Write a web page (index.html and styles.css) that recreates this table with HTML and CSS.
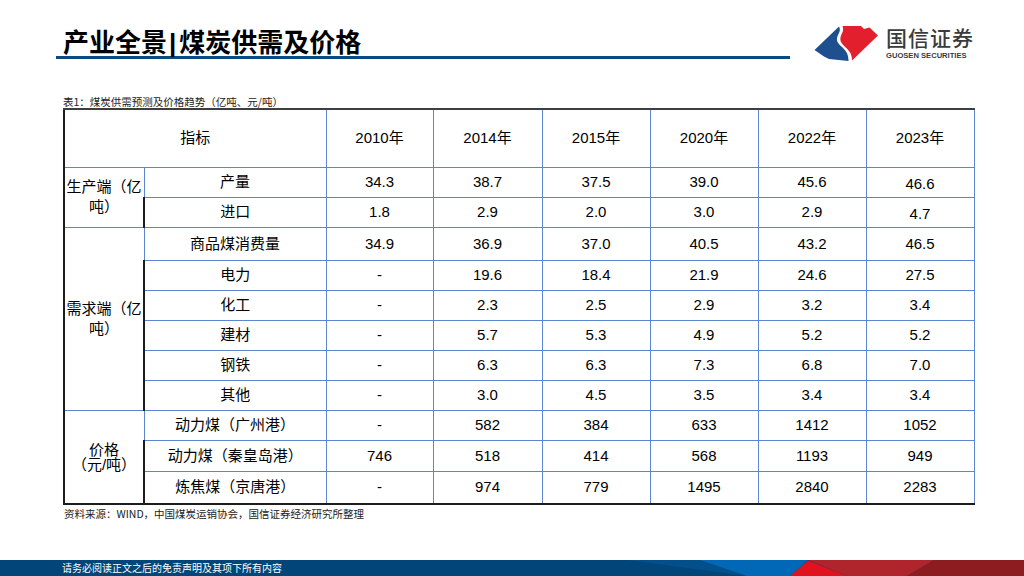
FILE: index.html
```html
<!DOCTYPE html>
<html lang="zh-CN">
<head>
<meta charset="utf-8">
<title>产业全景|煤炭供需及价格</title>
<link rel="stylesheet" href="styles.css">
</head>
<body>
<div class="page">
  <header class="header">
    <div class="title-wrap">
      <h1 class="title">产业全景<span class="bar">|</span>煤炭供需及价格</h1>
    </div>
    <div class="logo">
      <svg class="logo-mark" width="68" height="42" viewBox="0 0 68 42">
        <path d="M2.5,28 L27,4.5 C30,10 24,13 25,18.5 C26,24.5 37,26.5 36.5,39 L17,37 L12,34.5 Z" fill="#1e4f8e"/>
        <path d="M30.5,4 L49,4 L52,7 L57.5,5.5 L66,13.5 L40,38.5 C40.5,27 29.5,24.5 28.5,18.5 C27.5,12.5 33,10 30.5,4 Z" fill="#e11f2d"/>
      </svg>
      <div class="logo-text">
        <div class="logo-cn">国信证券</div>
        <div class="logo-en">GUOSEN SECURITIES</div>
      </div>
    </div>
  </header>

  <main class="content">
    <p class="caption">表1：煤炭供需预测及价格趋势（亿吨、元/吨）</p>
    <table class="data">
      <colgroup>
        <col class="c-grp"><col class="c-item"><col class="c-y1"><col class="c-y2"><col class="c-y"><col class="c-y"><col class="c-y"><col class="c-y">
      </colgroup>
      <thead>
        <tr class="h60">
          <th colspan="2">指标</th>
          <th>2010年</th><th>2014年</th><th>2015年</th><th>2020年</th><th>2022年</th><th>2023年</th>
        </tr>
      </thead>
      <tbody>
        <tr class="h30">
          <td rowspan="2" class="grp">生产端（亿吨）</td>
          <td>产量</td><td>34.3</td><td>38.7</td><td>37.5</td><td>39.0</td><td>45.6</td><td class="low">46.6</td>
        </tr>
        <tr class="h30">
          <td>进口</td><td>1.8</td><td>2.9</td><td>2.0</td><td>3.0</td><td>2.9</td><td class="low">4.7</td>
        </tr>
        <tr class="h33">
          <td rowspan="6" class="grp">需求端（亿吨）</td>
          <td>商品煤消费量</td><td>34.9</td><td>36.9</td><td>37.0</td><td>40.5</td><td>43.2</td><td>46.5</td>
        </tr>
        <tr class="h30">
          <td>电力</td><td>-</td><td>19.6</td><td>18.4</td><td>21.9</td><td>24.6</td><td>27.5</td>
        </tr>
        <tr class="h30">
          <td>化工</td><td>-</td><td>2.3</td><td>2.5</td><td>2.9</td><td>3.2</td><td>3.4</td>
        </tr>
        <tr class="h30">
          <td>建材</td><td>-</td><td>5.7</td><td>5.3</td><td>4.9</td><td>5.2</td><td>5.2</td>
        </tr>
        <tr class="h30">
          <td>钢铁</td><td>-</td><td>6.3</td><td>6.3</td><td>7.3</td><td>6.8</td><td>7.0</td>
        </tr>
        <tr class="h30">
          <td>其他</td><td>-</td><td>3.0</td><td>4.5</td><td>3.5</td><td>3.4</td><td>3.4</td>
        </tr>
        <tr class="h30">
          <td rowspan="3" class="grp tight">价格<br>（元/吨）</td>
          <td>动力煤（广州港）</td><td>-</td><td>582</td><td>384</td><td>633</td><td>1412</td><td>1052</td>
        </tr>
        <tr class="h31">
          <td>动力煤（秦皇岛港）</td><td>746</td><td>518</td><td>414</td><td>568</td><td>1193</td><td>949</td>
        </tr>
        <tr class="h32">
          <td>炼焦煤（京唐港）</td><td>-</td><td>974</td><td>779</td><td>1495</td><td>2840</td><td>2283</td>
        </tr>
      </tbody>
    </table>
    <p class="source">资料来源：WIND，中国煤炭运销协会，国信证券经济研究所整理</p>
  </main>

  <footer class="footer">
    <span class="footer-text">请务必阅读正文之后的免责声明及其项下所有内容</span>
    <svg class="footer-deco" width="420" height="16" viewBox="604 0 420 16" preserveAspectRatio="none">
      <polygon points="627,0 805,0 805,16 747,16" fill="#024f8b"/>
      <polygon points="700,0 808,0 790,16 747,16" fill="#0068b6"/>
      <polygon points="808,0 934,0 907,16 847,16" fill="#b0242c"/>
      <polygon points="790,16 808,0.5 847,16" fill="#e1121e"/>
      <polygon points="934,0 1024,0 1024,16 907,16" fill="#8d1c21"/>
    </svg>
  </footer>
</div>
</body>
</html>
```

FILE: styles.css
```css
* { box-sizing: border-box; }

html, body {
  margin: 0;
  padding: 0;
  background: #ffffff;
}

.page {
  width: 1024px;
  height: 576px;
  display: flex;
  flex-direction: column;
  overflow: hidden;
  font-family: "Liberation Sans", "Noto Sans CJK SC", sans-serif;
  color: #000;
}

/* ---------- header ---------- */
.header {
  display: flex;
  align-items: flex-start;
  padding-left: 56px;
  height: 59px;
  flex: none;
}

.title-wrap {
  width: 734px;
  padding-top: 26px;
}

.title {
  margin: 0;
  padding-left: 7px;
  height: 33px;
  line-height: 30px;
  font-family: "Noto Sans CJK SC", sans-serif;
  font-size: 26px;
  font-weight: 700;
  color: #000;
  border-bottom: 3px solid #0b4a80;
  white-space: nowrap;
}

.title .bar {
  font-family: "Liberation Sans", sans-serif;
  font-weight: 700;
  padding: 0 3px 0 2px;
}

.logo {
  display: flex;
  align-items: flex-start;
  margin-left: 22px;
  margin-top: 22px;
  gap: 6px;
}

.logo-mark { display: block; }

.logo-text {
  display: flex;
  flex-direction: column;
  padding-top: 3px;
}

.logo-cn {
  font-family: "Noto Sans CJK SC", sans-serif;
  font-size: 21px;
  line-height: 24px;
  letter-spacing: 1px;
  color: #3b3b3b;
  font-weight: 500;
}

.logo-en {
  margin-top: 2px;
  font-family: "Liberation Sans", sans-serif;
  font-size: 7.6px;
  line-height: 9px;
  font-weight: 700;
  color: #3b3b3b;
  white-space: nowrap;
}

/* ---------- content ---------- */
.content {
  flex: 1;
  padding-left: 63px;
  padding-top: 36px;
}

.caption, .source {
  margin: 0;
  font-family: "Noto Sans CJK SC", sans-serif;
  font-size: 10.5px;
  line-height: 13px;
  color: #222;
  white-space: nowrap;
}

.data {
  border-collapse: collapse;
  table-layout: fixed;
  width: 910px;
  font-size: 15px;
  color: #000;
  border-top: 2px solid #3e3e3e;
  border-left: 2px solid #1d1d1d;
  border-bottom: 2px solid #1d1d1d;
}

.c-grp { width: 80px; }
.c-item { width: 182px; }
.c-y1 { width: 107px; }
.c-y2 { width: 109px; }
.c-y { width: 108px; }

.data th,
.data td {
  border: 1px solid #5d86d2;
  text-align: center;
  vertical-align: middle;
  padding: 0 2px;
  font-weight: 400;
  line-height: 18px;
}

.data thead th { border-top: 2px solid #3e3e3e; }
.data tbody tr:last-child td { border-bottom: 2px solid #1d1d1d; }
.data tr > :first-child { border-left: 2px solid #1d1d1d; }

.data td.grp {
  line-height: 20px;
  padding: 0 1px;
}

.data td.tight { line-height: 15px; }

.data td.low { padding-top: 3px; }

.h60 { height: 58px; }
.h30 { height: 30px; }
.h31 { height: 31px; }
.h32 { height: 33px; }
.h33 { height: 33px; }

.source {
  margin-top: 2px;
  padding-left: 1px;
}

/* ---------- footer ---------- */
.footer {
  flex: none;
  height: 16px;
  display: flex;
  align-items: center;
  background: #024578;
  padding-left: 62px;
}

.footer-text {
  font-family: "Noto Sans CJK SC", sans-serif;
  font-size: 10px;
  line-height: 16px;
  color: #ffffff;
  white-space: nowrap;
}

.footer-deco {
  display: block;
  margin-left: auto;
  flex: none;
}
```
